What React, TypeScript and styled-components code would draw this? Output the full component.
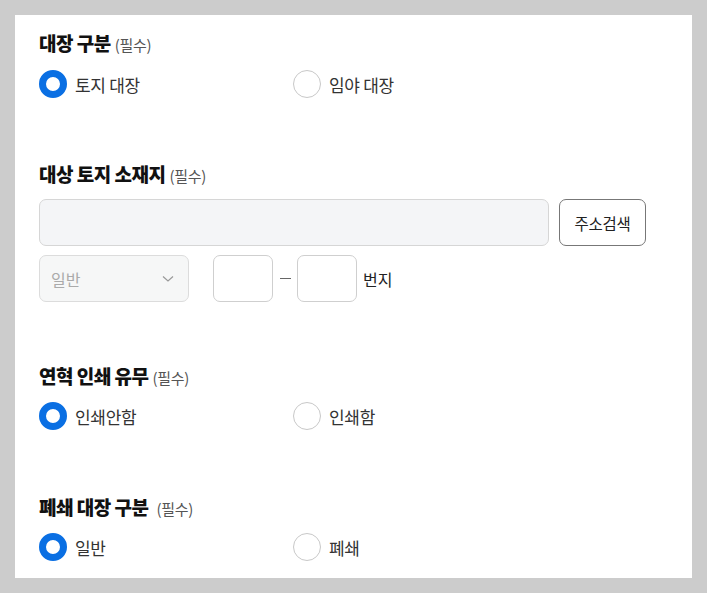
import React from "react";
import styled, { createGlobalStyle } from "styled-components";

const Global = createGlobalStyle`
  html, body { margin: 0; padding: 0; background: #cccccc; }
  body { font-family: "Noto Sans CJK KR", "Noto Sans", sans-serif; }
  * { box-sizing: border-box; }
`;

const Page = styled.div`
  padding: 15px;
`;

const Panel = styled.div`
  background: #ffffff;
  padding: 16px 24px 17px;
  display: flex;
  flex-direction: column;
`;

const Section = styled.section<{ $gapTop?: number }>`
  display: flex;
  flex-direction: column;
  margin-top: ${(p) => p.$gapTop ?? 0}px;
`;

const Title = styled.h3`
  margin: 0;
  height: 24px;
  line-height: 24px;
  font-size: 19px;
  font-weight: 800;
  color: #111;
  letter-spacing: -0.5px;
`;

const Req = styled.span<{ $wide?: boolean }>`
  font-size: 15px;
  font-weight: 400;
  color: #555;
  margin-left: ${(p) => (p.$wide ? 8 : 4)}px;
  letter-spacing: -0.3px;
`;

const RadioRow = styled.div<{ $gap: number }>`
  display: grid;
  grid-template-columns: 254px 254px;
  margin-top: ${(p) => p.$gap}px;
`;

const RadioItem = styled.label`
  display: flex;
  align-items: center;
  gap: 8px;
  height: 28px;
  font-size: 17px;
  color: #333;
  letter-spacing: -0.3px;
`;

const Dot = styled.span<{ $on?: boolean }>`
  width: 28px;
  height: 28px;
  border-radius: 50%;
  flex: none;
  background: #fff;
  border: ${(p) => (p.$on ? "7px solid #0a6fe3" : "1px solid #c8c8c8")};
`;

const AddrRow = styled.div`
  display: flex;
  gap: 10px;
  margin-top: 13px;
`;

const AddrInput = styled.div`
  width: 510px;
  height: 47px;
  background: #f4f5f7;
  border: 1px solid #d6d6d6;
  border-radius: 7px;
`;

const Button = styled.button`
  width: 87px;
  height: 47px;
  background: #fff;
  border: 1px solid #777;
  border-radius: 7px;
  font-family: inherit;
  font-size: 15.5px;
  color: #222;
  letter-spacing: -0.3px;
  padding: 0;
`;

const LotRow = styled.div`
  display: flex;
  align-items: center;
  margin-top: 9px;
`;

const Select = styled.div`
  width: 150px;
  height: 47px;
  background: #f6f7f7;
  border: 1px solid #dcdcdc;
  border-radius: 7px;
  display: flex;
  align-items: center;
  justify-content: space-between;
  padding: 0 14px 0 11px;
  font-size: 16px;
  color: #aaa;
  margin-right: 24px;
`;

const NumBox = styled.div`
  width: 60px;
  height: 47px;
  border: 1px solid #cfcfcf;
  border-radius: 7px;
  background: #fff;
`;

const Dash = styled.span`
  width: 24px;
  display: flex;
  justify-content: center;
  &::before {
    content: "";
    width: 11px;
    height: 1px;
    background: #666;
  }
`;

const Unit = styled.span`
  margin-left: 6px;
  font-size: 16px;
  color: #222;
`;

function Radios({ a, b, gap = 14 }: { a: string; b: string; gap?: number }) {
  return (
    <RadioRow $gap={gap}>
      <RadioItem>
        <Dot $on />
        {a}
      </RadioItem>
      <RadioItem>
        <Dot />
        {b}
      </RadioItem>
    </RadioRow>
  );
}

export default function App() {
  return (
    <>
      <Global />
      <Page>
        <Panel>
          <Section>
            <Title>
              대장 구분<Req>(필수)</Req>
            </Title>
            <Radios a="토지 대장" b="임야 대장" gap={15} />
          </Section>
          <Section $gapTop={64}>
            <Title>
              대상 토지 소재지<Req>(필수)</Req>
            </Title>
            <AddrRow>
              <AddrInput />
              <Button>주소검색</Button>
            </AddrRow>
            <LotRow>
              <Select>
                일반
                <svg width="12" height="8" viewBox="0 0 12 8">
                  <path d="M1 1.5 L6 6 L11 1.5" fill="none" stroke="#999" strokeWidth="1.2" />
                </svg>
              </Select>
              <NumBox />
              <Dash />
              <NumBox />
              <Unit>번지</Unit>
            </LotRow>
          </Section>
          <Section $gapTop={62}>
            <Title>
              연혁 인쇄 유무<Req>(필수)</Req>
            </Title>
            <Radios a="인쇄안함" b="인쇄함" />
          </Section>
          <Section $gapTop={65}>
            <Title>
              폐쇄 대장 구분<Req $wide>(필수)</Req>
            </Title>
            <Radios a="일반" b="폐쇄" />
          </Section>
        </Panel>
      </Page>
    </>
  );
}
